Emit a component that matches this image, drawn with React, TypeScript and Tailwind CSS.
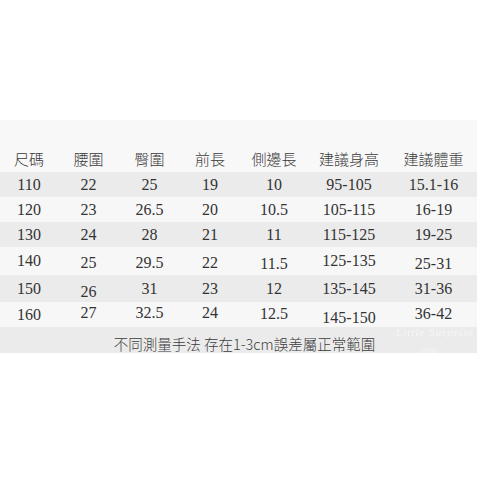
import React from "react";

const cols = "grid grid-cols-[58px_61px_61px_60px_68px_82px_87px]";

type Cell = { v: string; cls?: string };

const headers = ["尺碼", "腰圍", "臀圍", "前長", "側邊長", "建議身高", "建議體重"];

const rows: { bg: string; h: string; cells: Cell[] }[] = [
  { bg: "bg-[#ebebeb]", h: "h-[25px]", cells: [{ v: "110" }, { v: "22" }, { v: "25" }, { v: "19" }, { v: "10" }, { v: "95-105" }, { v: "15.1-16" }] },
  { bg: "bg-[#f7f7f7]", h: "h-[25px]", cells: [{ v: "120" }, { v: "23" }, { v: "26.5" }, { v: "20" }, { v: "10.5" }, { v: "105-115" }, { v: "16-19" }] },
  { bg: "bg-[#ebebeb]", h: "h-[25px]", cells: [{ v: "130" }, { v: "24" }, { v: "28" }, { v: "21" }, { v: "11" }, { v: "115-125" }, { v: "19-25" }] },
  { bg: "bg-[#f7f7f7]", h: "h-[28px]", cells: [{ v: "140" }, { v: "25", cls: "pt-[4px]" }, { v: "29.5", cls: "pt-[4px]" }, { v: "22", cls: "pt-[3px]" }, { v: "11.5", cls: "pt-[6px]" }, { v: "125-135" }, { v: "25-31", cls: "pt-[6px]" }] },
  { bg: "bg-[#ebebeb]", h: "h-[27px]", cells: [{ v: "150" }, { v: "26", cls: "pt-[7px]" }, { v: "31" }, { v: "23" }, { v: "12" }, { v: "135-145" }, { v: "31-36" }] },
  { bg: "bg-[#f7f7f7]", h: "h-[25px]", cells: [{ v: "160" }, { v: "27", cls: "pb-[4px]" }, { v: "32.5", cls: "pb-[3px]" }, { v: "24", cls: "pb-[3px]" }, { v: "12.5", cls: "pb-[2px]" }, { v: "145-150", cls: "pt-[7px]" }, { v: "36-42", cls: "pb-[2px]" }] },
];

export default function App() {
  return (
    <div className="w-[480px] h-[480px] bg-white overflow-hidden">
      <div className="relative mt-[120px] w-[477px]">
        <div className={`${cols} h-[52px] bg-[#f8f8f8] pt-[29px]`}>
          {headers.map((h) => (
            <div
              key={h}
              className="text-center text-[15px] leading-[20px] text-[#3a3a3a] font-light font-['Noto_Sans_CJK_TC','Noto_Sans',sans-serif]"
            >
              {h}
            </div>
          ))}
        </div>
        {rows.map((r, i) => (
          <div key={i} className={`${cols} ${r.h} ${r.bg}`}>
            {r.cells.map((c, j) => (
              <div
                key={j}
                className={`flex items-center justify-center text-[16px] leading-[18px] text-[#333] font-['Liberation_Serif','DejaVu_Serif',serif] ${c.cls ?? ""}`}
              >
                {c.v}
              </div>
            ))}
          </div>
        ))}
        <div className="flex h-[26px] items-center justify-center bg-[#ebebeb] pl-[12px] pt-[7px] text-[14.5px] leading-[18px] text-[#3c3c3c] font-light font-['Noto_Sans_CJK_TC','Noto_Sans',sans-serif]">
          不同測量手法 存在1-3cm誤差屬正常範圍
        </div>
        <div className="absolute left-[396px] top-[204px] text-[11px] italic text-white/60 tracking-[1px] font-['Liberation_Serif',serif]">
          Little Surprise
        </div>
        <div className="absolute left-[418px] top-[226px] text-[7px] text-white/60 font-['Liberation_Sans',sans-serif]">
          · shop ·
        </div>
      </div>
    </div>
  );
}
